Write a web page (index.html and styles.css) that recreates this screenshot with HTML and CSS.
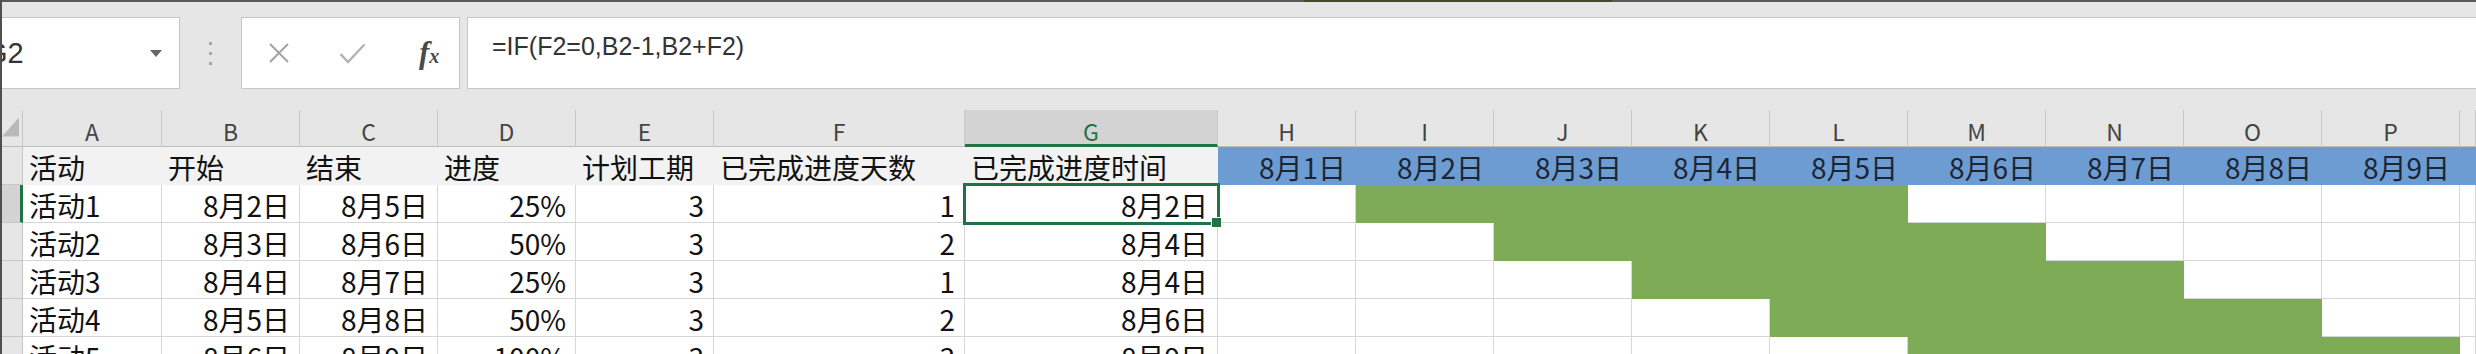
FILE: index.html
```html
<!DOCTYPE html>
<html lang="zh-CN">
<head>
  <meta charset="UTF-8" />
  <title>甘特图</title>
  <link rel="stylesheet" href="styles.css">
</head>
<body>
  <div class="edge"><span class="edge-gap"></span><span class="edge-green"></span></div>

  <div class="fbar">
    <div class="namebox"><span class="ref">G2</span><span class="caret"></span></div>
    <div class="grip"><i></i><i></i><i></i></div>
    <div class="fbtns">
      <svg class="ico-x" width="22" height="20" viewBox="0 0 22 20"><path d="M2 1 L20 19 M20 1 L2 19" stroke="#a3a3a3" stroke-width="2" fill="none"/></svg>
      <svg class="ico-ok" width="27" height="21" viewBox="0 0 27 21"><path d="M1.5 11 L9 19 L25.5 1.5" stroke="#b3b3b3" stroke-width="2.5" fill="none"/></svg>
      <span class="fx">f<span>x</span></span>
    </div>
    <div class="formula">=IF(F2=0,B2-1,B2+F2)</div>
  </div>

  <div class="sheet">
    <!-- column headers -->
    <div class="corner"><svg width="18" height="20" viewBox="0 0 18 20"><path d="M18 0 L18 20 L0 20 Z" fill="#b9b9b9"/></svg></div>
    <div class="ch">A</div><div class="ch">B</div><div class="ch">C</div><div class="ch">D</div>
    <div class="ch">E</div><div class="ch">F</div><div class="ch sel">G</div><div class="ch">H</div>
    <div class="ch">I</div><div class="ch">J</div><div class="ch">K</div><div class="ch">L</div>
    <div class="ch">M</div><div class="ch">N</div><div class="ch">O</div><div class="ch">P</div>
    <div class="ch"></div>

    <!-- row 1 -->
    <div class="rh"></div>
    <div class="c t">活动</div><div class="c t">开始</div><div class="c t">结束</div><div class="c t">进度</div>
    <div class="c t">计划工期</div><div class="c t">已完成进度天数</div><div class="c t">已完成进度时间</div>
    <div class="c day">8月1日</div><div class="c day">8月2日</div><div class="c day">8月3日</div>
    <div class="c day">8月4日</div><div class="c day">8月5日</div><div class="c day">8月6日</div>
    <div class="c day">8月7日</div><div class="c day">8月8日</div><div class="c day">8月9日</div>
    <div class="c day"></div>

    <!-- row 2 -->
    <div class="rh sel"></div>
    <div class="c">活动1</div><div class="c n">8月2日</div><div class="c n">8月5日</div><div class="c n">25%</div>
    <div class="c n">3</div><div class="c n">1</div><div class="c n active">8月2日</div>
    <div class="c"></div><div class="c g"></div><div class="c g"></div><div class="c g"></div><div class="c g"></div>
    <div class="c"></div><div class="c"></div><div class="c"></div><div class="c"></div><div class="c"></div>

    <!-- row 3 -->
    <div class="rh"></div>
    <div class="c">活动2</div><div class="c n">8月3日</div><div class="c n">8月6日</div><div class="c n">50%</div>
    <div class="c n">3</div><div class="c n">2</div><div class="c n">8月4日</div>
    <div class="c"></div><div class="c"></div><div class="c g"></div><div class="c g"></div><div class="c g"></div>
    <div class="c g"></div><div class="c"></div><div class="c"></div><div class="c"></div><div class="c"></div>

    <!-- row 4 -->
    <div class="rh"></div>
    <div class="c">活动3</div><div class="c n">8月4日</div><div class="c n">8月7日</div><div class="c n">25%</div>
    <div class="c n">3</div><div class="c n">1</div><div class="c n">8月4日</div>
    <div class="c"></div><div class="c"></div><div class="c"></div><div class="c g"></div><div class="c g"></div>
    <div class="c g"></div><div class="c g"></div><div class="c"></div><div class="c"></div><div class="c"></div>

    <!-- row 5 -->
    <div class="rh"></div>
    <div class="c">活动4</div><div class="c n">8月5日</div><div class="c n">8月8日</div><div class="c n">50%</div>
    <div class="c n">3</div><div class="c n">2</div><div class="c n">8月6日</div>
    <div class="c"></div><div class="c"></div><div class="c"></div><div class="c"></div><div class="c g"></div>
    <div class="c g"></div><div class="c g"></div><div class="c g"></div><div class="c"></div><div class="c"></div>

    <!-- row 6 -->
    <div class="rh"></div>
    <div class="c">活动5</div><div class="c n">8月6日</div><div class="c n">8月9日</div><div class="c n">100%</div>
    <div class="c n">3</div><div class="c n">3</div><div class="c n">8月9日</div>
    <div class="c"></div><div class="c"></div><div class="c"></div><div class="c"></div><div class="c"></div>
    <div class="c g"></div><div class="c g"></div><div class="c g"></div><div class="c g"></div><div class="c"></div>
  </div>
</body>
</html>
```

FILE: styles.css
```css
body {
  margin: 0;
  height: 354px;
  overflow: hidden;
  background-color: #e6e6e6;
  border-left: 2px solid #4f4f4f;
  font-family: "Noto Sans CJK SC", "Noto Sans", sans-serif;
  color: #111;
}
.edge {
  display: flex;
  height: 2px;
  background-color: #5a5a5a;
}
.edge-gap {
  width: 1302px;
}
.edge-green {
  width: 308px;
  background-color: #3d4a2b;
}

/* formula bar */
.fbar {
  display: flex;
  align-items: flex-start;
  height: 108px;
  box-sizing: border-box;
  padding-top: 15px;
}
.namebox {
  display: flex;
  align-items: center;
  justify-content: space-between;
  width: 178px;
  height: 72px;
  box-sizing: border-box;
  background-color: #fff;
  border: 1px solid #c6c6c6;
  border-left: none;
  overflow: hidden;
}
.ref {
  margin-left: -17px;
  font-family: "Liberation Sans", Arial, sans-serif;
  font-size: 29px;
  color: #333;
}
.caret {
  margin-right: 17px;
  border-left: 6px solid transparent;
  border-right: 6px solid transparent;
  border-top: 7px solid #666;
}
.grip {
  display: flex;
  flex-direction: column;
  align-items: center;
  justify-content: center;
  gap: 7px;
  width: 61px;
  height: 72px;
}
.grip i {
  width: 3px;
  height: 3px;
  background-color: #a6a6a6;
}
.fbtns {
  display: flex;
  align-items: center;
  width: 219px;
  height: 72px;
  box-sizing: border-box;
  padding-left: 26px;
  background-color: #fff;
  border: 1px solid #c6c6c6;
}
.ico-ok {
  margin-left: 49px;
}
.fx {
  margin-left: 53px;
  font-family: "Liberation Serif", serif;
  font-style: italic;
  font-weight: bold;
  font-size: 31px;
  color: #4a4a4a;
}
.fx span {
  font-size: 20px;
}
.formula {
  flex: 1;
  height: 72px;
  box-sizing: border-box;
  margin-left: 7px;
  padding: 14px 0 0 24px;
  background-color: #fff;
  border: 1px solid #c6c6c6;
  border-right: none;
  font-family: "Liberation Sans", Arial, sans-serif;
  font-size: 25px;
  line-height: 29px;
  color: #333;
}

/* sheet grid */
.sheet {
  display: grid;
  grid-template-columns: 21px 139px 138px 138px 138px 138px 251px 253px repeat(9, 138px) 1fr;
  grid-template-rows: 37px;
  grid-auto-rows: 38px;
}
.corner {
  display: flex;
  align-items: flex-end;
  padding: 0 3px 9px 0;
  box-sizing: border-box;
  border-bottom: 1px solid #bdbdbd;
  border-right: 1px solid #c6c6c6;
}
.ch {
  box-sizing: border-box;
  padding-top: 7px;
  line-height: 29px;
  text-align: center;
  font-size: 23px;
  color: #444;
  border-right: 1px solid #c8c8c8;
  border-bottom: 1px solid #bdbdbd;
}
.ch.sel {
  background-color: #d3d3d3;
  color: #217346;
  border-bottom: 3px solid #217346;
}
.rh {
  box-sizing: border-box;
  border-right: 1px solid #c6c6c6;
  border-bottom: 1px solid #c6c6c6;
}
.rh.sel {
  background-color: #d3d3d3;
  border-right: 3px solid #217346;
}
.c {
  position: relative;
  box-sizing: border-box;
  padding: 3px 9px 0 6px;
  line-height: 34px;
  font-size: 28px;
  white-space: nowrap;
  background-color: #fff;
  border-right: 1px solid #d6d6d6;
  border-bottom: 1px solid #d6d6d6;
}
.c.n {
  text-align: right;
}
.c.t {
  background-color: #f2f2f2;
  border-color: #f2f2f2;
}
.c.day {
  text-align: right;
  color: #1c2533;
  background-color: #6c9cd2;
  border-color: #6c9cd2;
}
.c.g {
  background-color: #7eab55;
  border-color: #7eab55;
}
.c.active::before {
  content: "";
  position: absolute;
  top: -2px;
  left: -2px;
  right: -3px;
  bottom: -3px;
  border: 3px solid #217346;
  z-index: 2;
}
.c.active::after {
  content: "";
  position: absolute;
  right: -5px;
  bottom: -6px;
  width: 9px;
  height: 9px;
  background-color: #217346;
  border: 1px solid #fff;
  z-index: 3;
}
```
